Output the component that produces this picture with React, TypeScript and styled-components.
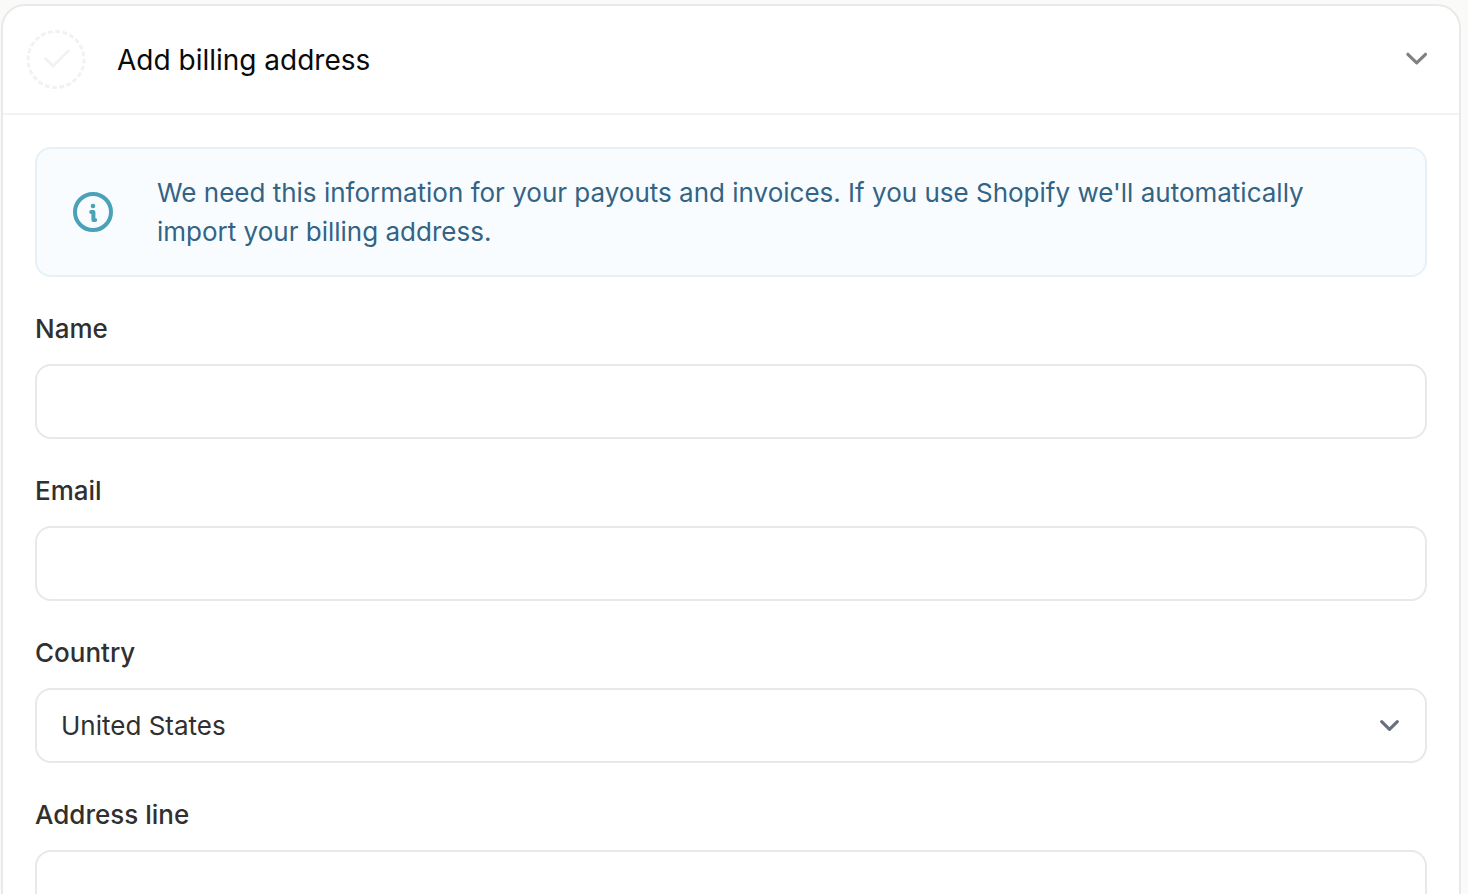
import React from 'react';
import styled, { createGlobalStyle } from 'styled-components';

const GlobalStyle = createGlobalStyle`
  * { box-sizing: border-box; }
  html, body { margin: 0; height: 894px; overflow: hidden; background: #fafaf9; }
  body { font-family: Inter, sans-serif; }
`;

const Page = styled.main`
  height: 894px;
  overflow: hidden;
  padding: 4px 7px 0 1px;
`;

const Card = styled.section`
  height: 960px;
  background: #fff;
  border: 2px solid #e9e9e9;
  border-radius: 24px;
`;

const Header = styled.header`
  height: 109px;
  display: flex;
  align-items: center;
  padding: 0 30px 0 23px;
  border-bottom: 2px solid #f2f2f2;
`;

const Title = styled.h2`
  flex: 1;
  margin: 1px 0 0 31px;
  font-size: 28px;
  line-height: 40px;
  font-weight: 400;
  color: #0a0a0a;
`;

const Body = styled.div`
  padding: 32px;
`;

const Notice = styled.div`
  display: flex;
  align-items: center;
  height: 130px;
  padding: 0 36px;
  border: 2px solid #e5f1f6;
  border-radius: 16px;
  background: #f8fcff;
`;

const NoticeText = styled.p`
  margin: 0 0 0 44px;
  font-size: 26px;
  line-height: 39px;
  color: #336485;
`;

const Field = styled.label`
  display: block;
  margin-top: 32px;
`;

const Label = styled.span`
  display: block;
  font-size: 26px;
  line-height: 39px;
  font-weight: 500;
  color: #303030;
`;

const Input = styled.input`
  display: block;
  width: 100%;
  height: 75px;
  margin-top: 16px;
  border: 2px solid #e8e8e8;
  border-radius: 16px;
  background: #fff;
  outline: none;
`;

const Select = styled.div`
  display: flex;
  align-items: center;
  justify-content: space-between;
  height: 75px;
  margin-top: 16px;
  padding: 0 24px;
  border: 2px solid #e8e8e8;
  border-radius: 16px;
  font-size: 26px;
  color: #303030;
`;

const Icon = styled.svg`
  flex: none;
  display: block;
  fill: none;
  stroke-linecap: round;
  stroke-linejoin: round;
`;

const DashedRing = styled.circle`
  stroke-linecap: butt;
  stroke-dasharray: 4.9 2.43;
  stroke-dashoffset: 1;
`;

export default function App() {
  return (
    <Page>
      <GlobalStyle />
      <Card>
        <Header>
          <Icon width="60" height="60" viewBox="0 0 60 60" stroke="#f2f2f2" strokeWidth="3">
            <DashedRing cx="30" cy="29.5" r="28" />
            <path d="M19.7 28.7l7.3 7.3 15.3-15" />
          </Icon>
          <Title>Add billing address</Title>
          <Icon width="24" height="16" viewBox="0 0 24 16" stroke="#808080" strokeWidth="3.2">
            <path d="M2.9 2.3l8.8 8.6 8.8-8.6" />
          </Icon>
        </Header>
        <Body>
          <Notice>
            <Icon width="40" height="40" viewBox="0 0 40 40" stroke="#4aa1b8" strokeWidth="4">
              <circle cx="20" cy="20" r="18" />
              <circle cx="20" cy="14" r="2.3" fill="#4aa1b8" stroke="none" />
              <path strokeWidth="4" d="M18.2 20h2.2v8h1.8" />
            </Icon>
            <NoticeText>
              We need this information for your payouts and invoices. If you use Shopify we'll automatically import your billing address.
            </NoticeText>
          </Notice>
          <Field><Label>Name</Label><Input /></Field>
          <Field><Label>Email</Label><Input /></Field>
          <Field>
            <Label>Country</Label>
            <Select>
              United States
              <Icon width="24" height="16" viewBox="0 0 24 16" stroke="#6b7080" strokeWidth="3.2">
                <path d="M4.7 3.7l7.8 7.6 7.8-7.6" />
              </Icon>
            </Select>
          </Field>
          <Field><Label>Address line</Label><Input /></Field>
        </Body>
      </Card>
    </Page>
  );
}
